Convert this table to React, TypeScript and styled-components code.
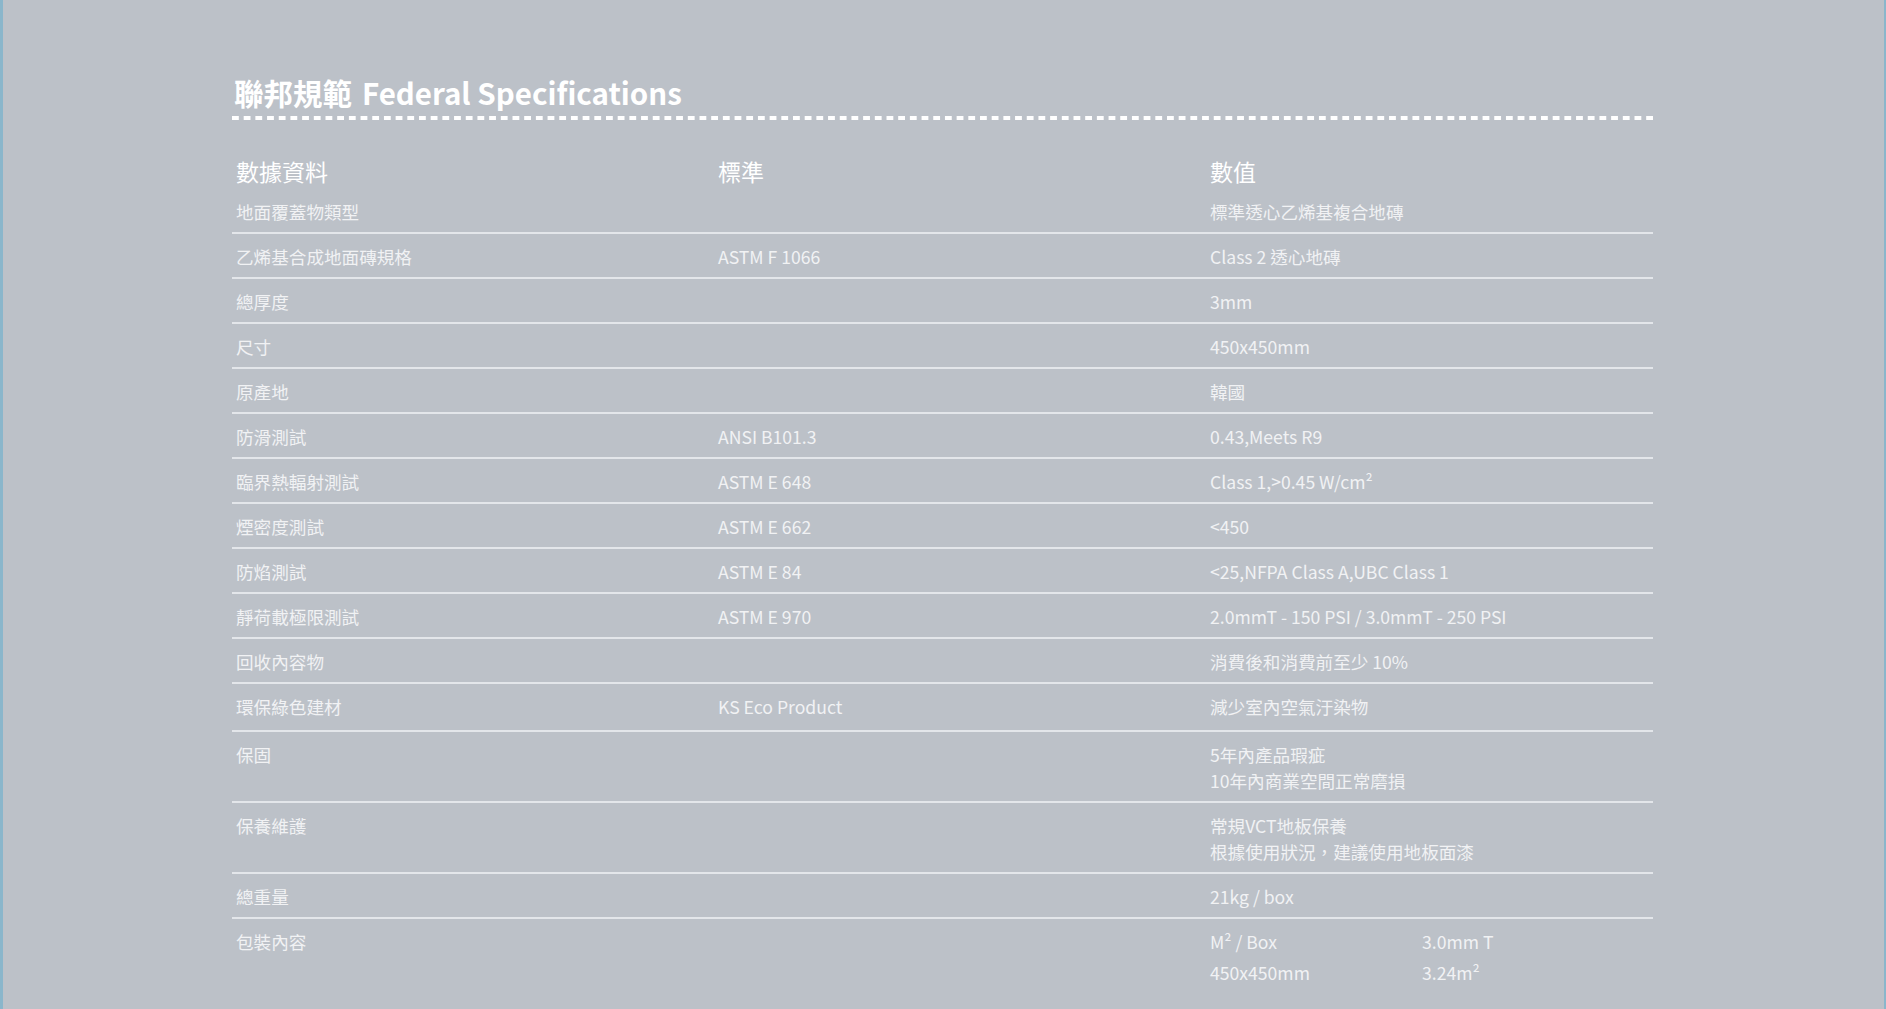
import React from 'react';
import styled, {createGlobalStyle} from 'styled-components';

type Spec = {
    label: string;
    standard?: string;
    value: React.ReactNode;
    loose?: boolean;
};

const specs: Spec[] = [
    {label: '地面覆蓋物類型', value: '標準透心乙烯基複合地磚'},
    {label: '乙烯基合成地面磚規格', standard: 'ASTM F 1066', value: 'Class 2 透心地磚'},
    {label: '總厚度', value: '3mm'},
    {label: '尺寸', value: '450x450mm'},
    {label: '原產地', value: '韓國'},
    {label: '防滑測試', standard: 'ANSI B101.3', value: '0.43,Meets R9'},
    {label: '臨界熱輻射測試', standard: 'ASTM E 648', value: 'Class 1,>0.45 W/cm²'},
    {label: '煙密度測試', standard: 'ASTM E 662', value: '<450'},
    {label: '防焰測試', standard: 'ASTM E 84', value: '<25,NFPA Class A,UBC Class 1'},
    {label: '靜荷載極限測試', standard: 'ASTM E 970', value: '2.0mmT - 150 PSI / 3.0mmT - 250 PSI'},
    {label: '回收內容物', value: '消費後和消費前至少 10%'},
    {label: '環保綠色建材', standard: 'KS Eco Product', value: '減少室內空氣汙染物', loose: true},
    {label: '保固', value: <>5年內產品瑕疵<br/>10年內商業空間正常磨損</>},
    {label: '保養維護', value: <>常規VCT地板保養<br/>根據使用狀況，建議使用地板面漆</>},
    {label: '總重量', value: '21kg / box'},
];

const packing = ['M² / Box', '3.0mm T', '450x450mm', '3.24m²'];

export default function App() {
    return (
        <>
            <GlobalStyle/>
            <Page>
                <Section>
                    <Title>聯邦規範<TitleEn>Federal Specifications</TitleEn></Title>
                    <Dashes/>
                    <HeadRow>
                        <HeadCell>數據資料</HeadCell>
                        <HeadCell>標準</HeadCell>
                        <HeadCell>數值</HeadCell>
                    </HeadRow>
                    {specs.map((s) => (
                        <Row key={s.label} $loose={s.loose}>
                            <Cell>{s.label}</Cell>
                            <Cell>{s.standard}</Cell>
                            <Cell>{s.value}</Cell>
                        </Row>
                    ))}
                    <PackRow>
                        <Cell>包裝內容</Cell>
                        <Cell/>
                        <PackGrid>
                            {packing.map((p) => (
                                <span key={p}>{p}</span>
                            ))}
                        </PackGrid>
                    </PackRow>
                </Section>
            </Page>
        </>
    );
}

const GlobalStyle = createGlobalStyle`
  body {
    margin: 0;
    background: #bcc1c8;
    font-family: "Noto Sans CJK TC", "Noto Sans", sans-serif;
  }
`

const Page = styled.div`
  min-height: 100vh;
  box-sizing: border-box;
  background: #bcc1c8;
  border-left: 3px solid #8ab6cb;
  border-right: 2px solid #8ab6cb;
  overflow: hidden;
`

const Section = styled.section`
  width: 1421px;
  margin-left: 229px;
  padding-top: 72px;
  color: #f3f4f6;
`

const Title = styled.h2`
  margin: 0;
  padding-left: 2px;
  font-size: 29.5px;
  line-height: 40px;
  font-weight: 700;
  color: #ffffff;
`

const TitleEn = styled.span`
  margin-left: 10px;
`

const Dashes = styled.div`
  height: 4px;
  margin-top: 4px;
  background-image: linear-gradient(to right, #ffffff 0 7px, transparent 7px 11.7px);
  background-size: 11.7px 4px;
  background-repeat: repeat-x;
`

const HeadRow = styled.div`
  display: grid;
  grid-template-columns: 482px 492px 1fr;
  padding: 0 0 3px 4px;
  margin-top: 36px;
`

const HeadCell = styled.div`
  font-size: 23px;
  line-height: 30px;
  color: #ffffff;
`

const Row = styled.div<{ $loose?: boolean }>`
  display: grid;
  grid-template-columns: 482px 492px 1fr;
  padding: 10px 0 ${(p) => (p.$loose ? '10px' : '7px')} 4px;
  border-bottom: 2px solid #e3e6ea;
`

const Cell = styled.div`
  font-size: 17.6px;
  line-height: 26px;
  color: #f1f2f4;
  white-space: nowrap;
`

const PackRow = styled(Row)`
  padding-top: 7px;
  border-bottom: none;

  ${Cell} {
    line-height: 31px;
  }
`

const PackGrid = styled.div`
  display: grid;
  grid-template-columns: 212px 1fr;
  font-size: 17.6px;
  line-height: 31px;
  color: #f1f2f4;
`
